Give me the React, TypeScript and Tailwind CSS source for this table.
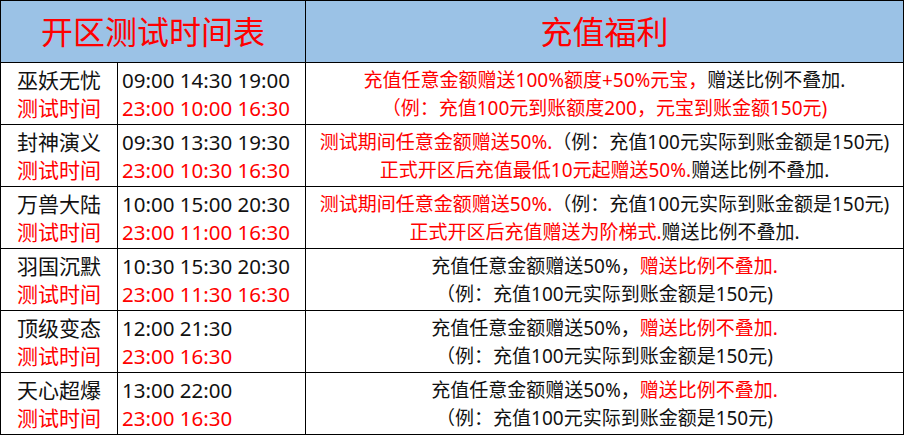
const FONT = "font-['Noto_Sans','Noto_Sans_CJK_SC',sans-serif]";

type Seg = { t: string; red?: boolean };

const ROWS: { name: string; times: string; test: string; lines: Seg[][] }[] = [
  {
    name: "巫妖无忧",
    times: "09:00 14:30 19:00",
    test: "23:00 10:00 16:30",
    lines: [
      [{ t: "充值任意金额赠送100%额度+50%元宝，", red: true }, { t: "赠送比例不叠加." }],
      [{ t: "（例：充值100元到账额度200，元宝到账金额150元)", red: true }],
    ],
  },
  {
    name: "封神演义",
    times: "09:30 13:30 19:30",
    test: "23:00 10:30 16:30",
    lines: [
      [{ t: "测试期间任意金额赠送50%.", red: true }, { t: "（例：充值100元实际到账金额是150元)" }],
      [{ t: "正式开区后充值最低10元起赠送50%.", red: true }, { t: "赠送比例不叠加." }],
    ],
  },
  {
    name: "万兽大陆",
    times: "10:00 15:00 20:30",
    test: "23:00 11:00 16:30",
    lines: [
      [{ t: "测试期间任意金额赠送50%.", red: true }, { t: "（例：充值100元实际到账金额是150元)" }],
      [{ t: "正式开区后充值赠送为阶梯式.", red: true }, { t: "赠送比例不叠加." }],
    ],
  },
  {
    name: "羽国沉默",
    times: "10:30 15:30 20:30",
    test: "23:00 11:30 16:30",
    lines: [
      [{ t: "充值任意金额赠送50%，" }, { t: "赠送比例不叠加.", red: true }],
      [{ t: "（例：充值100元实际到账金额是150元)" }],
    ],
  },
  {
    name: "顶级变态",
    times: "12:00 21:30",
    test: "23:00 16:30",
    lines: [
      [{ t: "充值任意金额赠送50%，" }, { t: "赠送比例不叠加.", red: true }],
      [{ t: "（例：充值100元实际到账金额是150元)" }],
    ],
  },
  {
    name: "天心超爆",
    times: "13:00 22:00",
    test: "23:00 16:30",
    lines: [
      [{ t: "充值任意金额赠送50%，" }, { t: "赠送比例不叠加.", red: true }],
      [{ t: "（例：充值100元实际到账金额是150元)" }],
    ],
  },
];

export default function App() {
  return (
    <div className={`${FONT} h-[435px] w-[906px] bg-white text-[#111]`}>
      <div className="w-[904px] border-l border-t border-black">
        {/* header */}
        <div className="flex h-[62px] bg-[#9bc2e6] text-[32px] leading-none text-[#ff0000]">
          <div className="flex w-[305px] items-center justify-center border-b border-r border-black">
            开区测试时间表
          </div>
          <div className="flex w-[598px] items-center justify-center border-b border-r border-black">
            充值福利
          </div>
        </div>

        {ROWS.map((r) => (
          <div key={r.name} className="flex h-[62px] leading-[28px]">
            <div className="flex w-[117px] flex-col items-center justify-center border-b border-r border-black text-[21px]">
              <span>{r.name}</span>
              <span className="text-[#ff0000]">测试时间</span>
            </div>
            <div className="flex w-[188px] flex-col justify-center border-b border-r border-black pl-[4px] text-[20.5px]">
              <span>{r.times}</span>
              <span className="text-[#ff0000]">{r.test}</span>
            </div>
            <div className="flex w-[598px] flex-col items-center justify-center border-b border-r border-black text-[19px]">
              {r.lines.map((line, i) => (
                <div key={i} className="whitespace-nowrap">
                  {line.map((s, j) => (
                    <span key={j} className={s.red ? "text-[#ff0000]" : ""}>
                      {s.t}
                    </span>
                  ))}
                </div>
              ))}
            </div>
          </div>
        ))}
      </div>
    </div>
  );
}
